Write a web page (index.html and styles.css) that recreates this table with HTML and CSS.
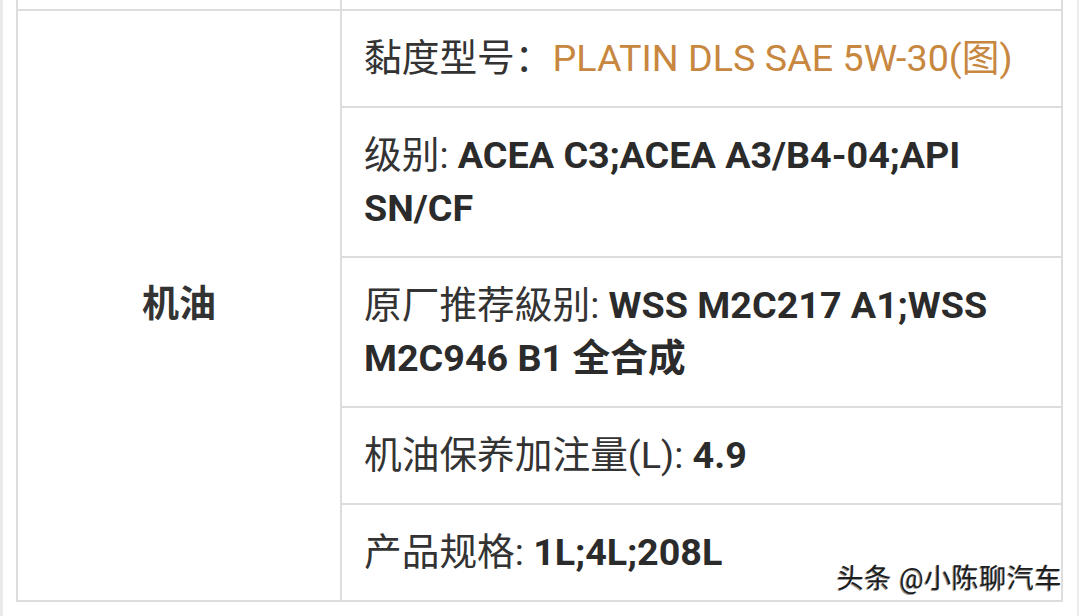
FILE: index.html
```html
<!DOCTYPE html>
<html lang="zh-CN">
<head>
<meta charset="utf-8">
<title>机油</title>
<link rel="stylesheet" href="styles.css">
</head>
<body>
<div class="page">
  <div class="sheet">
    <div class="grid">
      <div class="cell cut"></div>
      <div class="cell cut"></div>
      <div class="cell head">机油</div>
      <div class="cell val">黏度型号：<span class="link">PLATIN DLS SAE 5W-30(图)</span></div>
      <div class="cell val">级别: <b>ACEA C3;ACEA A3/B4-04;API SN/CF</b></div>
      <div class="cell val">原厂推荐級别: <b>WSS M2C217 A1;WSS M2C946 B1 全合成</b></div>
      <div class="cell val">机油保养加注量(L): <b>4.9</b></div>
      <div class="cell val">产品规格: <b>1L;4L;208L</b></div>
    </div>
    <div class="mark">头条 @小陈聊汽车</div>
  </div>
</div>
</body>
</html>
```

FILE: styles.css
```css
html, body {
  margin: 0;
  padding: 0;
  background: #fff;
}
body {
  font-family: "Roboto", "Noto Sans CJK SC", sans-serif;
  color: #333;
  width: 1080px;
  height: 616px;
  overflow: hidden;
}
.page {
  height: 616px;
  border-left: 3px solid #e9e9e9;
  box-sizing: border-box;
  padding-left: 13px;
  display: flex;
}
.sheet {
  position: relative;
  width: 1047px;
  padding-right: 14px;
  border-right: 2px solid #ececec;
}
.grid {
  display: grid;
  grid-template-columns: 322px 719px;
  grid-template-rows: 9px auto auto auto auto auto;
  gap: 2px;
  background: #dddddd;
  padding: 0 2px 2px 2px;
  width: 1043px;
}
.cell {
  background: #fff;
}
.head {
  grid-column: 1;
  grid-row: 2 / span 5;
  display: flex;
  align-items: center;
  justify-content: center;
  font-weight: 700;
  font-size: 37px;
  color: #333;
  padding-bottom: 10px;
}
.val {
  grid-column: 2;
  font-size: 37.7px;
  line-height: 53px;
  padding: 21px 40px 21px 22px;
  color: #333;
}
.val b {
  font-weight: 700;
  color: #2b2b2b;
}
.link {
  color: #c8873f;
}
.mark {
  position: absolute;
  right: 15px;
  top: 562px;
  font-size: 27px;
  line-height: 34px;
  color: #1e1e1e;
  letter-spacing: 0.6px;
  text-shadow: -1px 1px 0 #9a9a9a, 1px 0 0 #ffffff;
  white-space: nowrap;
}
```
